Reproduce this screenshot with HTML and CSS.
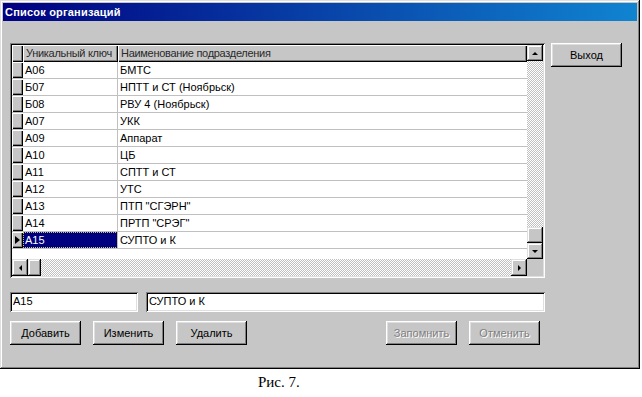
FILE: index.html
```html
<!DOCTYPE html>
<html lang="ru">
<head>
  <meta charset="utf-8" />
  <title>Список организаций</title>
  <link rel="stylesheet" href="styles.css">
</head>
<body>
<div class="window">
  <div class="titlebar">Список организаций</div>
  <div class="content">
    <div class="top">
      <div class="dbgrid">
        <div class="table">
          <div class="row head">
            <div class="ind"></div>
            <div class="cell">Уникальный ключ</div>
            <div class="cell">Наименование подразделения</div>
          </div>
          <div class="row"><div class="ind"></div><div class="cell">А06</div><div class="cell">БМТС</div></div>
          <div class="row"><div class="ind"></div><div class="cell">Б07</div><div class="cell">НПТТ и СТ (Ноябрьск)</div></div>
          <div class="row"><div class="ind"></div><div class="cell">Б08</div><div class="cell">РВУ 4 (Ноябрьск)</div></div>
          <div class="row"><div class="ind"></div><div class="cell">А07</div><div class="cell">УКК</div></div>
          <div class="row"><div class="ind"></div><div class="cell">А09</div><div class="cell">Аппарат</div></div>
          <div class="row"><div class="ind"></div><div class="cell">А10</div><div class="cell">ЦБ</div></div>
          <div class="row"><div class="ind"></div><div class="cell">А11</div><div class="cell">СПТТ и СТ</div></div>
          <div class="row"><div class="ind"></div><div class="cell">А12</div><div class="cell">УТС</div></div>
          <div class="row"><div class="ind"></div><div class="cell">А13</div><div class="cell">ПТП "СГЭРН"</div></div>
          <div class="row"><div class="ind"></div><div class="cell">А14</div><div class="cell">ПРТП "СРЭГ"</div></div>
          <div class="row current"><div class="ind"><span class="pointer"></span></div><div class="cell sel">А15</div><div class="cell">СУПТО и К</div></div>
        </div>
        <div class="vscroll">
          <div class="sbtn"><span class="arr up"></span></div>
          <div class="track"></div>
          <div class="thumb"></div>
          <div class="sbtn"><span class="arr down"></span></div>
        </div>
        <div class="hscroll">
          <div class="sbtn"><span class="arr left"></span></div>
          <div class="thumb"></div>
          <div class="track"></div>
          <div class="sbtn"><span class="arr right"></span></div>
        </div>
        <div class="corner"></div>
      </div>
      <button class="btn">Выход</button>
    </div>
    <div class="fields">
      <div class="edit key">А15</div>
      <div class="edit name">СУПТО и К</div>
    </div>
    <div class="actions">
      <button class="btn">Добавить</button>
      <button class="btn">Изменить</button>
      <button class="btn">Удалить</button>
      <button class="btn off push">Запомнить</button>
      <button class="btn off">Отменить</button>
    </div>
  </div>
</div>
<div class="caption">Рис. 7.</div>
</body>
</html>
```

FILE: styles.css
```css
body{margin:0;background:#fff;font-family:"Liberation Sans",Arial,sans-serif;font-size:11px;color:#000;}
.window{width:640px;height:369px;box-sizing:border-box;padding:3px;background:#c6c6c6;box-shadow:inset -1px -1px #000,inset 1px 1px #dfdfdf,inset -2px -2px #808080,inset 2px 2px #fff;}
.titlebar{height:18px;line-height:18px;padding-left:2px;color:#fff;font-weight:bold;font-size:11px;letter-spacing:0.2px;background:linear-gradient(to right,#000080,#1084d0);}
.content{padding:22px 0 0 7px;}
.top{display:flex;gap:6px;align-items:flex-start;}

/* таблица */
.dbgrid{width:535px;height:235px;box-sizing:border-box;padding:2px;display:grid;grid-template-columns:1fr 16px;grid-template-rows:1fr 17px;
  box-shadow:inset 1px 1px #808080,inset -1px -1px #fff,inset 2px 2px #000,inset -2px -2px #dfdfdf;}
.table{background:#fff;overflow:hidden;}
.row{display:grid;grid-template-columns:11px 95px 1fr;height:17px;box-sizing:border-box;border-bottom:1px solid #c0c0c0;}
.row .cell{padding-left:2px;line-height:16px;white-space:nowrap;overflow:hidden;border-right:1px solid #c0c0c0;}
.row .cell:last-child{border-right:0;}
.ind{background:#c6c6c6;box-shadow:inset 1px 1px #fff,inset -1px -1px #000,inset -2px -2px #808080;display:flex;align-items:center;padding-left:3px;}
.head{height:17px;border-bottom:0;}
.head .cell{background:#c6c6c6;color:#2a2a2a;border-right:0;letter-spacing:-0.3px;padding-left:3px;box-shadow:inset 1px 1px #fff,inset -1px -1px #000,inset -2px -2px #808080;}
.pointer{width:0;height:0;border-top:4px solid transparent;border-bottom:4px solid transparent;border-left:5px solid #000;}
.sel{background:#000080;color:#fff;outline:1px dotted #c8c864;outline-offset:-1px;}

/* полосы прокрутки */
.vscroll{display:flex;flex-direction:column;}
.hscroll{display:flex;}
.track{flex:1;background:repeating-conic-gradient(#c0c0c0 0 25%,#fff 0 50%) 0 0/2px 2px;}
.sbtn,.thumb{width:16px;height:16px;flex:none;background:#c6c6c6;display:flex;align-items:center;justify-content:center;
  box-shadow:inset -1px -1px #000,inset 1px 1px #dfdfdf,inset -2px -2px #808080,inset 2px 2px #fff;}
.hscroll .sbtn,.hscroll .thumb{height:17px;}
.hscroll .thumb{width:13px;}
.corner{background:#c6c6c6;}
.arr{width:0;height:0;}
.arr.up{border-left:3px solid transparent;border-right:3px solid transparent;border-bottom:3px solid #000;}
.arr.down{border-left:3px solid transparent;border-right:3px solid transparent;border-top:3px solid #000;}
.arr.left{border-top:3px solid transparent;border-bottom:3px solid transparent;border-right:3px solid #000;}
.arr.right{border-top:3px solid transparent;border-bottom:3px solid transparent;border-left:3px solid #000;}

/* кнопки */
.btn{width:71px;height:24px;padding:0;border:0;background:#c6c6c6;font:11px "Liberation Sans",Arial,sans-serif;color:#000;
  box-shadow:inset -1px -1px #000,inset 1px 1px #fff,inset -2px -2px #808080,inset 2px 2px #dfdfdf;}
.btn.off{color:#808080;text-shadow:1px 1px #fff;}

/* поля ввода */
.fields{display:flex;gap:8px;margin-top:14px;}
.edit{height:20px;box-sizing:border-box;background:#fff;padding:0 0 0 3px;line-height:19px;white-space:nowrap;
  box-shadow:inset 1px 1px #808080,inset -1px -1px #fff,inset 2px 2px #000,inset -2px -2px #dfdfdf;}
.edit.key{width:128px;}
.edit.name{width:399px;}
.actions{display:flex;gap:12px;margin-top:9px;}
.actions .push{margin-left:127px;}

.caption{padding:5px 0 0 258px;font-family:"Liberation Serif","Times New Roman",serif;font-size:15px;}
```
